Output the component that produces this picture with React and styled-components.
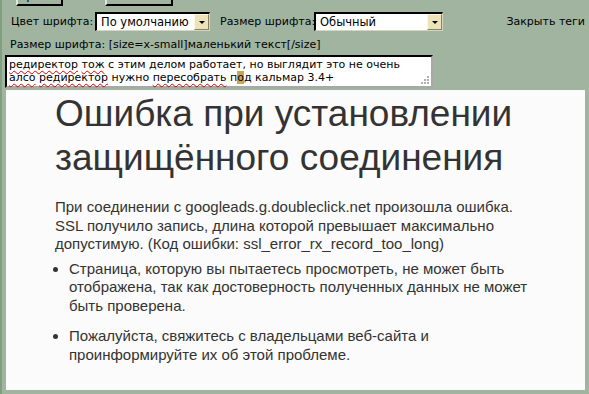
import React from "react";
import styled, { createGlobalStyle } from "styled-components";

const GlobalStyle = createGlobalStyle`
  html, body {
    margin: 0;
    padding: 0;
  }
  body {
    background: #a0b4a0;
    overflow: hidden;
  }
`;

const Frame = styled.div`
  width: 589px;
  height: 394px;
  box-sizing: border-box;
  border-left: 2px solid #7f9f7f;
  display: flex;
  flex-direction: column;
  overflow: hidden;
  font-family: "DejaVu Sans", Verdana, sans-serif;
  color: #000;
`;

const ButtonStrip = styled.div`
  height: 6px;
  flex: 0 0 auto;
  overflow: hidden;
  display: flex;
  align-items: flex-end;
  gap: 42px;
  padding-left: 14px;
`;

const TagButton = styled.div`
  width: ${({ $w }) => $w}px;
  height: 20px;
  flex: 0 0 auto;
  box-sizing: border-box;
  border: 2px solid;
  border-color: #dfe8df #000 #000 #dfe8df;
  font-size: 12px;
  line-height: 14px;
  text-align: center;
`;

const ToolRow = styled.div`
  display: flex;
  align-items: center;
  height: 19px;
  margin-top: 6px;
  padding: 0 4px 0 9px;
  font-size: 11px;
`;

const Label = styled.span`
  width: ${({ $w }) => $w}px;
  margin-left: ${({ $gap }) => $gap || 0}px;
  white-space: nowrap;
`;

const Select = styled.div`
  width: ${({ $w }) => $w}px;
  height: 19px;
  box-sizing: border-box;
  display: flex;
  align-items: stretch;
  background: #fff;
  border-top: 2px solid #000;
  border-left: 2px solid #000;
  border-right: 1px solid #d8d4c0;
  border-bottom: 1px solid #d8d4c0;

  .value {
    flex: 1;
    padding-left: 4px;
    font-size: 11.5px;
    line-height: 16px;
    white-space: nowrap;
  }
`;

const Arrow = styled.div`
  width: 15px;
  box-sizing: border-box;
  background: #ece3b9;
  border: 1px solid;
  border-color: #fff8e0 #8a8060 #8a8060 #fff8e0;
  display: flex;
  align-items: center;
  justify-content: center;

  &::after {
    content: "";
    border-left: 3px solid transparent;
    border-right: 3px solid transparent;
    border-top: 3px solid #000;
  }
`;

const CloseTags = styled.span`
  margin-left: auto;
  white-space: nowrap;
`;

const SizeHint = styled.div`
  margin-top: 7px;
  padding-left: 8px;
  font-size: 11px;
  line-height: 13px;
  white-space: nowrap;
`;

const Editor = styled.div`
  position: relative;
  width: 428px;
  height: 33px;
  margin: 4px 0 0 3px;
  box-sizing: border-box;
  background: #fff;
  border-top: 2px solid #000;
  border-left: 2px solid #000;
  border-right: 2px solid #a8a8a8;
  border-bottom: 2px solid #a8a8a8;
  padding: 1px 2px;
  font-size: 11px;
  line-height: 13px;
`;

const Misspelled = styled.span`
  text-decoration: underline wavy #e00000;
  text-decoration-skip-ink: none;
  text-underline-offset: 2px;
  text-decoration-thickness: 1px;
`;

const Caret = styled.span`
  background: #c9a653;
`;

const Grip = styled.svg`
  position: absolute;
  right: 1px;
  bottom: 1px;
`;

const ErrorPanel = styled.div`
  height: 300px;
  margin: 2px 4px 0 4px;
  box-sizing: border-box;
  padding: 2px 45px 0 49px;
  background: #fbfbfb;
  font-family: "Liberation Sans", Arial, sans-serif;
  color: #333;
`;

const Title = styled.h1`
  margin: 0;
  font-size: 37px;
  font-weight: 400;
  line-height: 44px;
`;

const Text = styled.p`
  margin: 18px 0 0;
  font-size: 15px;
  line-height: 18.5px;
`;

const Hints = styled.ul`
  margin: 6px 0 0;
  padding-left: 14px;
  font-size: 15px;
  line-height: 18.5px;

  li + li {
    margin-top: 12px;
  }
`;

export default function App() {
  return (
    <>
      <GlobalStyle />
      <Frame>
        <ButtonStrip>
          <TagButton $w={47}>Spoiler</TagButton>
          <TagButton $w={68}>Youtube</TagButton>
        </ButtonStrip>

        <ToolRow>
          <Label $w={84}>Цвет шрифта:</Label>
          <Select $w={115}>
            <span className="value">По умолчанию</span>
            <Arrow />
          </Select>
          <Label $w={94} $gap={10}>Размер шрифта:</Label>
          <Select $w={129}>
            <span className="value">Обычный</span>
            <Arrow />
          </Select>
          <CloseTags>Закрыть теги</CloseTags>
        </ToolRow>

        <SizeHint>Размер шрифта: [size=x-small]маленький текст[/size]</SizeHint>

        <Editor>
          <Misspelled>редиректор</Misspelled> <Misspelled>тож</Misspelled> с этим делом
          работает, но выглядит это не очень
          <br />
          <Misspelled>алсо</Misspelled> <Misspelled>редиректор</Misspelled> нужно{" "}
          <Misspelled>пересобрать</Misspelled> п<Caret>о</Caret>д кальмар 3.4+
          <Grip width="9" height="9" viewBox="0 0 9 9">
            <rect x="6" y="0" width="2" height="2" fill="#b0b0b0" />
            <rect x="3" y="3" width="2" height="2" fill="#b0b0b0" />
            <rect x="6" y="3" width="2" height="2" fill="#b0b0b0" />
            <rect x="0" y="6" width="2" height="2" fill="#b0b0b0" />
            <rect x="3" y="6" width="2" height="2" fill="#b0b0b0" />
            <rect x="6" y="6" width="2" height="2" fill="#b0b0b0" />
          </Grip>
        </Editor>

        <ErrorPanel>
          <Title>Ошибка при установлении защищённого соединения</Title>
          <Text>
            При соединении с googleads.g.doubleclick.net произошла ошибка. SSL
            получило запись, длина которой превышает максимально допустимую.
            (Код ошибки: ssl_error_rx_record_too_long)
          </Text>
          <Hints>
            <li>
              Страница, которую вы пытаетесь просмотреть, не может быть
              отображена, так как достоверность полученных данных не может
              быть проверена.
            </li>
            <li>
              Пожалуйста, свяжитесь с владельцами веб-сайта и проинформируйте
              их об этой проблеме.
            </li>
          </Hints>
        </ErrorPanel>
      </Frame>
    </>
  );
}
